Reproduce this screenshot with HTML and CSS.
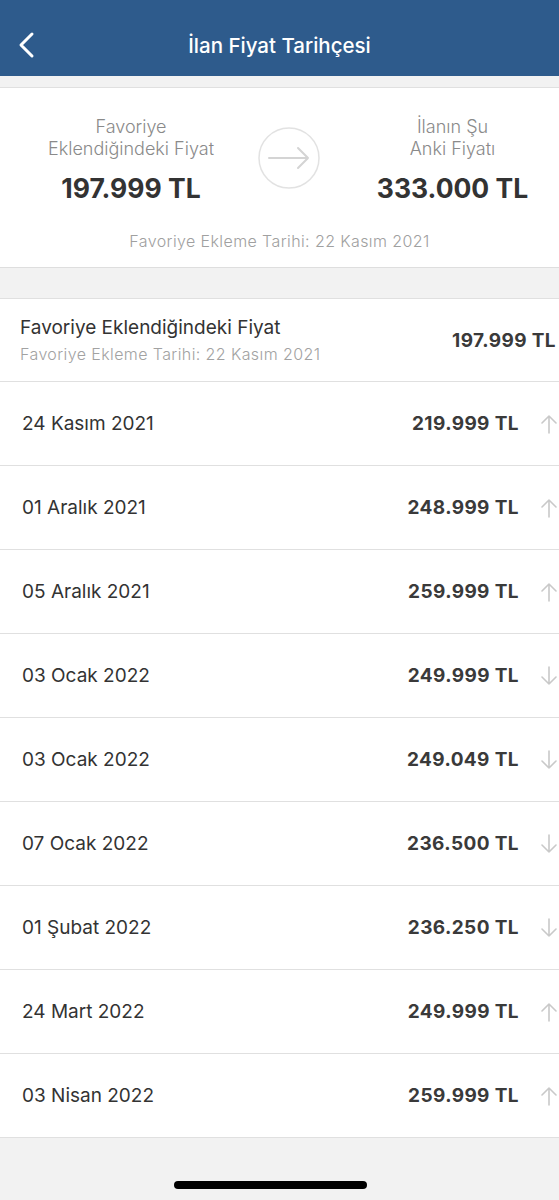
FILE: index.html
```html
<!DOCTYPE html>
<html lang="tr">
<head>
  <meta charset="UTF-8">
  <title>İlan Fiyat Tarihçesi</title>
  <link rel="stylesheet" href="styles.css">
</head>
<body>

<div class="topbar">
  <svg class="back" width="18" height="28" viewBox="0 0 18 28">
    <path d="M15 3 L4 14 L15 25" fill="none" stroke="#fff" stroke-width="3" stroke-linecap="round" stroke-linejoin="round"/>
  </svg>
  <h1>İlan Fiyat Tarihçesi</h1>
</div>

<div class="gap small"></div>

<div class="summary">
  <div class="compare">
    <div class="side left">
      <div class="label">Favoriye<br>Eklendiğindeki Fiyat</div>
      <div class="big">197.999 TL</div>
    </div>
    <div class="circle">
      <svg width="62" height="62" viewBox="0 0 62 62">
        <circle cx="31" cy="31" r="30" fill="none" stroke="#e2e2e2" stroke-width="1.5"/>
        <path d="M11 31 H50 M40 21 L50 31 L40 41" fill="none" stroke="#d4d4d4" stroke-width="2" stroke-linecap="round" stroke-linejoin="round"/>
      </svg>
    </div>
    <div class="side right">
      <div class="label">İlanın Şu<br>Anki Fiyatı</div>
      <div class="big">333.000 TL</div>
    </div>
  </div>
  <div class="added">Favoriye Ekleme Tarihi: 22 Kasım 2021</div>
</div>

<div class="gap"></div>

<div class="list">
  <div class="row first">
    <div>
      <div class="title">Favoriye Eklendiğindeki Fiyat</div>
      <div class="sub">Favoriye Ekleme Tarihi: 22 Kasım 2021</div>
    </div>
    <div class="price">197.999 TL</div>
  </div>

  <div class="row"><span class="date">24 Kasım 2021</span><span class="price">219.999 TL</span><span class="arrow up"></span></div>
  <div class="row"><span class="date">01 Aralık 2021</span><span class="price">248.999 TL</span><span class="arrow up"></span></div>
  <div class="row"><span class="date">05 Aralık 2021</span><span class="price">259.999 TL</span><span class="arrow up"></span></div>
  <div class="row"><span class="date">03 Ocak 2022</span><span class="price">249.999 TL</span><span class="arrow down"></span></div>
  <div class="row"><span class="date">03 Ocak 2022</span><span class="price">249.049 TL</span><span class="arrow down"></span></div>
  <div class="row"><span class="date">07 Ocak 2022</span><span class="price">236.500 TL</span><span class="arrow down"></span></div>
  <div class="row"><span class="date">01 Şubat 2022</span><span class="price">236.250 TL</span><span class="arrow down"></span></div>
  <div class="row"><span class="date">24 Mart 2022</span><span class="price">249.999 TL</span><span class="arrow up"></span></div>
  <div class="row"><span class="date">03 Nisan 2022</span><span class="price">259.999 TL</span><span class="arrow up"></span></div>
</div>

<div class="bottom">
  <div class="home-bar"></div>
</div>

<script>
  // arrows drawn once, same svg for up and down (down is just rotated)
  var svg = '<svg width="16" height="20" viewBox="0 0 16 20"><path d="M8 19 V2 M1 9 L8 2 L15 9" fill="none" stroke="#c9c9c9" stroke-width="1.6" stroke-linecap="round" stroke-linejoin="round"/></svg>';
  document.querySelectorAll('.arrow').forEach(function (el) { el.innerHTML = svg; });
</script>
</body>
</html>
```

FILE: styles.css
```css
* { box-sizing: border-box; }
body {
  margin: 0;
  font-family: Inter, "Liberation Sans", Arial, sans-serif;
  background: #f2f2f2;
  color: #333;
}
.topbar {
  height: 76px;
  background: #2e5b8c;
  display: flex;
  align-items: center;
  justify-content: center;
  position: relative;
  padding-top: 14px;
}
.topbar h1 {
  margin: 0;
  color: #fff;
  font-size: 20.5px;
  font-weight: 500;
}
.back {
  position: absolute;
  left: 17px;
  top: 31px;
}
.gap {
  height: 30px;
  background: #f2f2f2;
}
.gap.small { height: 12px; border-bottom: 1px solid #e0e0e0; }
.summary {
  background: #fff;
  height: 180px;
  border-bottom: 1px solid #dedede;
  padding-top: 28px;
}
.compare {
  display: flex;
  align-items: center;
}
.side {
  text-align: center;
}
.side.left { width: 258px; padding-left: 4px; }
.side.right { flex: 1; padding-left: 26px; }
.side .label {
  color: #8a8a8a;
  font-size: 18px;
  font-weight: 300;
  line-height: 22px;
}
.side .big {
  font-size: 26.5px;
  font-weight: 700;
  color: #333;
  margin-top: 12px;
}
.circle {
  width: 62px;
  height: 62px;
  margin-top: -4px;
}
.added {
  text-align: center;
  color: #a0a0a0;
  font-size: 16px;
  font-weight: 300;
  letter-spacing: 0.4px;
  margin-top: 27px;
}
.list {
  background: #fff;
  border-top: 1px solid #e0e0e0;
}
.row {
  height: 84px;
  display: flex;
  align-items: center;
  padding-left: 22px;
  border-bottom: 1px solid #e0e0e0;
}
.row.first {
  height: 83px;
  justify-content: space-between;
  padding-left: 20px;
  padding-right: 3px;
}
.row .title {
  font-size: 19px;
  color: #333;
}
.row .sub {
  font-size: 16px;
  font-weight: 300;
  letter-spacing: 0.4px;
  color: #a2a2a2;
  margin-top: 5px;
}
.date {
  flex: 1;
  font-size: 19px;
  color: #333;
}
.price {
  font-size: 19px;
  font-weight: 700;
  letter-spacing: 0.4px;
  color: #3a3a3a;
}
.arrow {
  width: 40px;
  display: flex;
  justify-content: flex-end;
  padding-right: 2px;
}
.arrow.down svg { transform: rotate(180deg); }
.bottom {
  height: 63px;
  display: flex;
  justify-content: center;
  align-items: flex-end;
  padding-bottom: 12px;
}
.home-bar {
  width: 193px;
  height: 8px;
  border-radius: 4px;
  background: #000;
  margin-right: 18px;
}
```
